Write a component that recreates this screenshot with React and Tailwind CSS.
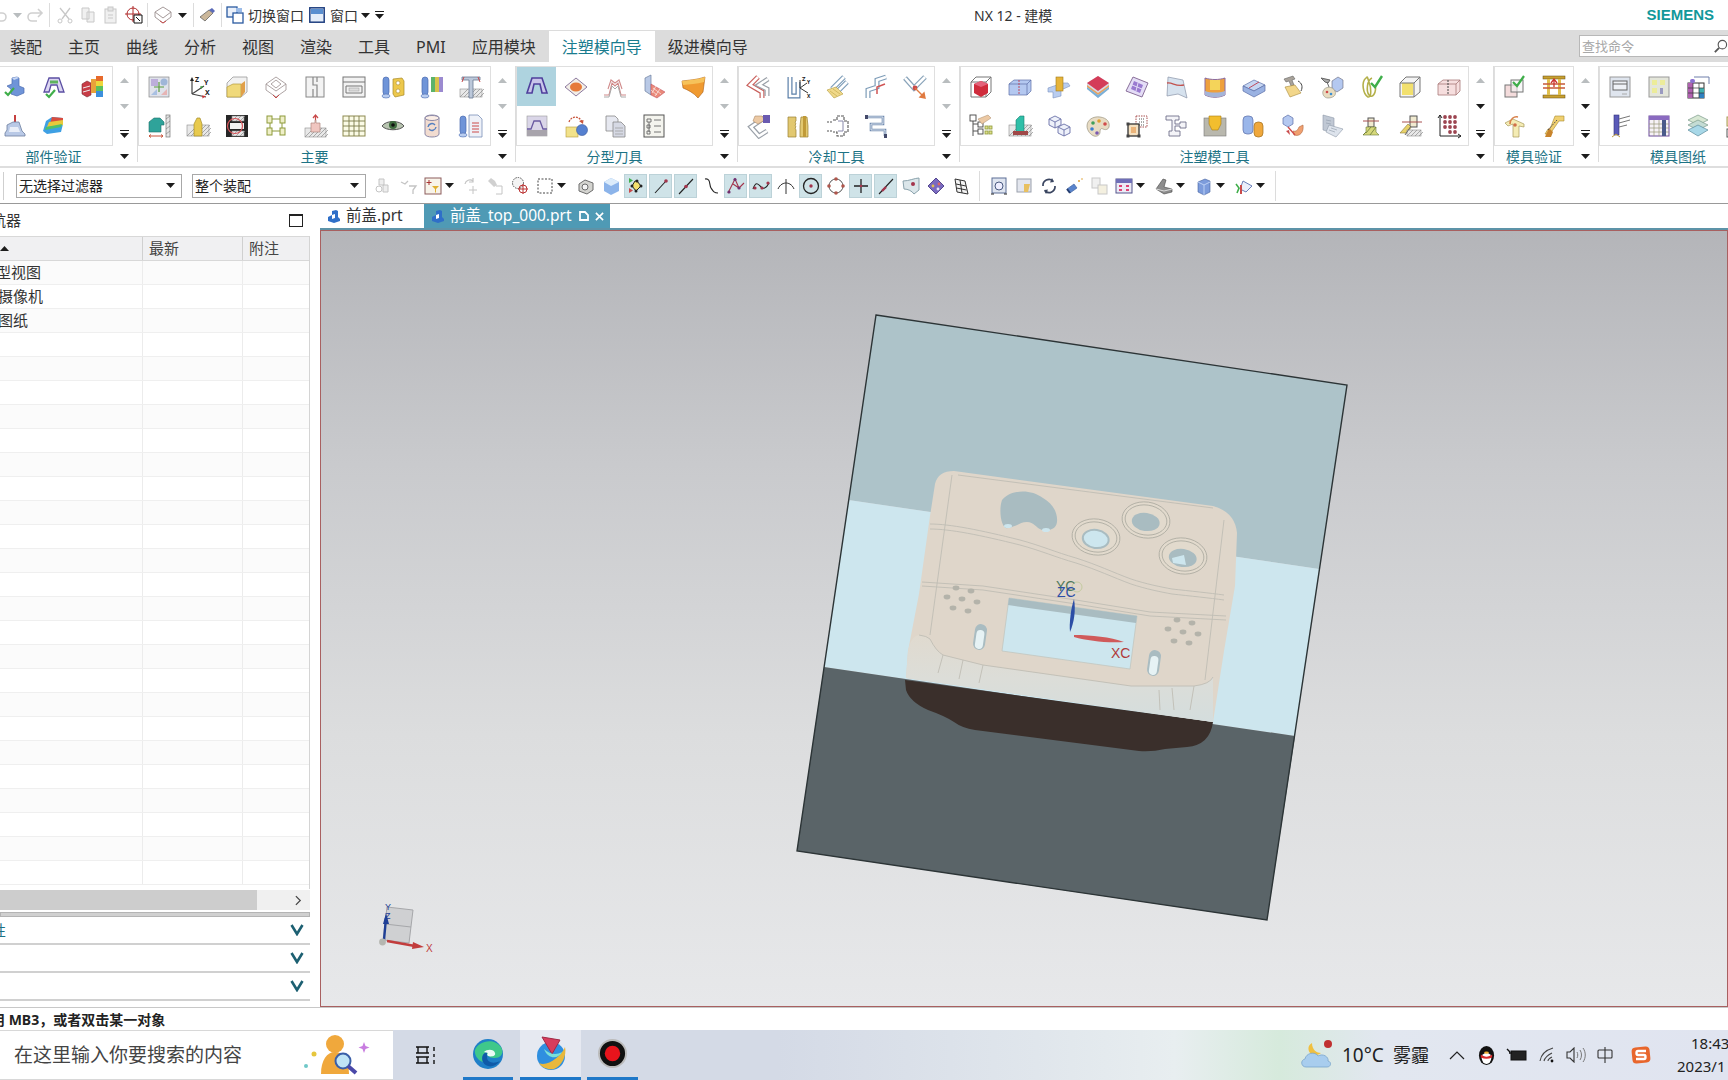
import React from 'react';

const I = ({ children }) => (
  <svg viewBox="0 0 26 26" className="w-[26px] h-[26px] shrink-0">{children}</svg>
);
const T = ({ children }) => (
  <svg viewBox="0 0 20 20" className="w-[20px] h-[20px] shrink-0">{children}</svg>
);

const Caret = ({ up, gray }) => (
  <svg viewBox="0 0 9 5" className="w-[9px] h-[5px] shrink-0">
    <path d={up ? 'M0 5h9L4.500 0z' : 'M0 0h9L4.500 5z'} fill={gray ? '#b9bdbf' : '#1c1c1c'} />
  </svg>
);
const More = () => (
  <div className="flex flex-col items-center gap-[2px]">
    <div className="w-[9px] h-[1px] bg-[#1c1c1c]" />
    <Caret />
  </div>
);

const Check = ({ x = 0, y = 0 }) => (
  <path d={`M${x + 1} ${y + 5}l3 3 6-7`} fill="none" stroke="#3fae4a" strokeWidth="2.200" />
);
const Hatch = ({ x = 2, y = 16, w = 22, h = 8 }) => (
  <g>
    <rect x={x} y={y} width={w} height={h} fill="#e8e8e8" stroke="#8d8d8d" strokeWidth=".6" />
    {[0, 4, 8, 12, 16, 20].filter((d) => d < w).map((d) => (
      <path key={d} d={`M${x + d} ${y + h}l${h} -${h}`} stroke="#8d8d8d" strokeWidth=".7" />
    ))}
  </g>
);
const Bolt = ({ x = 6, c = '#6f94d8' }) => (
  <g>
    <rect x={x} y="3" width="6" height="18" rx="3" fill={c} stroke="#4a6cb0" strokeWidth=".7" />
    <ellipse cx={x + 3} cy="22" rx="4" ry="2" fill="#b9cdf0" stroke="#4a6cb0" strokeWidth=".6" />
  </g>
);
const Pipe = ({ d, c = '#8a8f98' }) => (
  <g fill="none">
    <path d={d} stroke={c} strokeWidth="5" />
    <path d={d} stroke="#fff" strokeWidth="2.600" />
  </g>
);
const Wire = ({ c = '#777' }) => (
  <g fill="none" stroke={c} strokeWidth="1">
    <path d="M3 8h15v15H3zM3 8l5-5h15v15l-5 5M18 8l5-5" />
  </g>
);

const RIBBON = [
  {
    label: '部件验证', first: true, downGray: true,
    rows: [[
      <I><path d="M5 12l5-2v-6l5-1 2 1v8l5 2v5l-7 3-6-2v-5z" fill="#6f94d8" stroke="#4a6cb0" strokeWidth=".7" /><path d="M10 4l5-1 2 1-5 2z" fill="#c9d8f4" /><Check x={2} y={13} /></I>,
      <I><path d="M8 4h10l5 14h-5l-2-7h-6l-2 7H3z" fill="#dcd6f2" stroke="#5b4fa3" strokeWidth="1.300" /><path d="M9 8h8" stroke="#5eb35e" strokeWidth="3" /><Check x={4} y={15} /></I>,
      <I><path d="M2 10l5-3 4 2v12l-4 2-5-3z" fill="#c83c46" stroke="#7b2a32" strokeWidth=".6" /><path d="M3 14l7-2M3 18l7-2" stroke="#eee" /><rect x="16" y="2" width="7" height="5" fill="#e76a2c" /><rect x="16" y="7" width="7" height="5" fill="#edd63b" /><rect x="16" y="12" width="7" height="5" fill="#5cc05c" /><rect x="16" y="17" width="7" height="6" fill="#3c8fdc" /><rect x="11" y="5" width="5" height="14" fill="#e8a23a" /></I>,
    ], [
      <I><path d="M13 2v7" stroke="#c6403f" strokeWidth="2" /><path d="M5 12l6-3h6l3 9 3 3v2H3v-3l2-3z" fill="#b9c9e6" stroke="#6d7f9e" strokeWidth=".8" /><path d="M8 14h8l2 5H7z" fill="#e9eef8" /></I>,
      <I><path d="M5 8l6-4 11 1v6l-2 8-14 2-4-3z" fill="#3ea0e4" /><path d="M11 4l11 1v5l-13 1z" fill="#d84d3f" /><path d="M8 9l14-2v5L6 14z" fill="#e8c93c" /><path d="M5 14l16-3-1 3-16 3z" fill="#4fc06a" /></I>,
    ]],
  },
  {
    label: '主要', downGray: true,
    rows: [[
      <I><rect x="3" y="3" width="20" height="20" fill="#dfe2ea" stroke="#888" strokeWidth=".7" /><rect x="5" y="5" width="7" height="7" fill="#bcaeda" /><circle cx="18" cy="8" r="3.500" fill="#9fb6d8" /><path d="M5 21l6-6v6z" fill="#a9c0e2" /><path d="M15 21l6-6v6z" fill="#e6b4b4" /><path d="M13 8v10M8 13h10" stroke="#5b9c3f" strokeWidth="1.200" /></I>,
      <I><path d="M7 20V5M7 20l14 3M7 20l12-8" fill="none" stroke="#444" strokeWidth="1.200" /><path d="M5 7l2-4 2 4z" fill="#222" /><path d="M21 22l-4-.6.6 3z" fill="#c33" /><path d="M18 12l-3 .5 1.500 2.500z" fill="#3a9c3a" /><text x="10" y="8" fontSize="7" fontWeight="700" fill="#222">Z</text><text x="19" y="11" fontSize="7" fontWeight="700" fill="#222">Y</text><text x="20" y="21" fontSize="7" fontWeight="700" fill="#222">X</text></I>,
      <I><path d="M3 9l6-6h14v15l-6 5H3z" fill="#f2f2f2" stroke="#999" strokeWidth=".8" /><path d="M3 13l6-3h8v13H3z" fill="#f0d97a" stroke="#b49b3a" strokeWidth=".7" /><path d="M17 10l4-3v11l-4 5z" fill="#e0a04a" /></I>,
      <I><g fill="none" stroke="#a59a9a" strokeWidth=".9"><path d="M13 3l10 7-10 7-10-7z" /><path d="M3 10v6l10 7 10-7v-6" /><path d="M13 6l5 4-5 4-5-4z" /></g><path d="M10 21l3 3 3-3" fill="none" stroke="#c94a4a" /></I>,
      <I><rect x="4" y="3" width="18" height="20" fill="#f3f3f3" stroke="#888" /><path d="M11 3v8h4v12M15 3v5M11 23v-8" fill="none" stroke="#888" strokeWidth="1.200" /></I>,
      <I><rect x="2" y="3" width="22" height="20" fill="#f2f2f2" stroke="#777" /><path d="M2 8h22M5 12h16v7H5z" fill="none" stroke="#777" /><rect x="8" y="14" width="10" height="3" fill="#ddd" stroke="#999" strokeWidth=".5" /></I>,
      <I><Bolt x={3} /><path d="M13 5l9-1 2 3v14l-9 2-2-3z" fill="#edc84c" stroke="#a88a2a" strokeWidth=".7" /><circle cx="18" cy="9" r="2" fill="#fff" stroke="#a88a2a" strokeWidth=".6" /><circle cx="18" cy="17" r="2" fill="#fff" stroke="#a88a2a" strokeWidth=".6" /></I>,
      <I><Bolt x={3} /><rect x="12" y="3" width="4" height="15" fill="#5cb36a" /><rect x="16" y="3" width="4" height="15" fill="#d8c24c" /><rect x="20" y="3" width="4" height="15" fill="#9b8ad0" /></I>,
      <I><Hatch x={2} y={15} w={22} h={8} /><path d="M4 3h18v3H15v18h-4V6H4z" fill="#bcc8da" stroke="#6a7a92" strokeWidth=".8" /><path d="M6 3l-2 5M20 3l2 5" stroke="#c94a4a" /></I>,
    ], [
      <I><path d="M3 19V9l5-4h6l4 4v3h-3v7z" fill="#2fa39a" stroke="#1c6e68" strokeWidth=".6" /><rect x="20" y="2" width="4" height="22" fill="#e6e6e6" stroke="#777" strokeWidth=".7" /><path d="M20 6l4-3M20 11l4-3M20 16l4-3M20 21l4-3" stroke="#777" strokeWidth=".6" /><path d="M3 23h14M3 23l2-1.500M3 23l2 1.500M17 23l-2-1.500M17 23l-2 1.500" stroke="#c8553c" /></I>,
      <I><Hatch x={2} y={12} w={22} h={11} /><path d="M9 23V11l3-6h3l2 6v12z" fill="#e8ca4e" stroke="#a48c2c" strokeWidth=".7" /></I>,
      <I><rect x="2" y="2" width="22" height="22" fill="#262626" /><Hatch x={8} y={3} w={12} h={5} /><Hatch x={8} y={18} w={12} h={5} /><path d="M6 10h14v6H6z" fill="#f2f2f2" /><circle cx="11" cy="13" r="7.500" fill="none" stroke="#d8555a" strokeWidth="1.200" /></I>,
      <I><g fill="#efefc8" stroke="#8d9a3a" strokeWidth="1"><rect x="4" y="3" width="5" height="7" /><rect x="17" y="3" width="5" height="7" /><rect x="4" y="15" width="5" height="7" /><rect x="17" y="15" width="5" height="7" /></g><path d="M9 6h8M9 18h8M7 10v5M19 10v5" stroke="#8d9a3a" /></I>,
      <I><Hatch x={3} y={15} w={21} h={9} /><path d="M9 10h4V7h1v3h4v9H9z" fill="#f0c6c0" stroke="#b08880" strokeWidth=".7" /><path d="M13.500 7V2M11 5l2.500-3L16 5" fill="none" stroke="#c94a4a" strokeWidth="1.200" /></I>,
      <I><rect x="2" y="3" width="22" height="20" fill="#fbfbe6" stroke="#8d8a50" /><path d="M2 8h22M2 13h22M2 18h22M8 3v20M13 3v20M18 3v20" stroke="#7a7a4a" strokeWidth=".9" /></I>,
      <I><path d="M2 13c4-6 18-6 22 0-4 5-18 5-22 0z" fill="#b8c4b0" stroke="#555" /><circle cx="13" cy="12" r="4" fill="#3f6d3f" /><circle cx="13" cy="12" r="1.800" fill="#111" /></I>,
      <I><path d="M6 5c0-4 14-4 14 0v16c0 4-14 4-14 0z" fill="#f2dcd0" stroke="#8d8aa8" /><ellipse cx="13" cy="5" rx="7" ry="2.500" fill="#fbeee6" stroke="#8d8aa8" /><path d="M9 14a4 4 0 0 1 7-2M17 14a4 4 0 0 1-7 2" fill="none" stroke="#5580c0" strokeWidth="1.400" /></I>,
      <I><Bolt x={2} /><path d="M11 2h9l4 4v18H11z" fill="#eef1f8" stroke="#7a8fb8" strokeWidth=".8" /><path d="M14 10h7M14 13h7M14 16h7M14 19h7" stroke="#cc4a4a" /></I>,
    ]],
  },
  {
    label: '分型刀具', downGray: true, hl: true,
    rows: [[
      <I><path d="M8 4h10l5 15h-5l-2-9h-6l-2 9H3z" fill="#c9c5ea" stroke="#4f3f9c" strokeWidth="1.600" /></I>,
      <I><path d="M13 4l11 9-11 9-11-9z" fill="#f2eee6" stroke="#8d7aa0" /><ellipse cx="13" cy="13" rx="6" ry="4.500" fill="#e67a3a" /></I>,
      <I><path d="M2 21h5l3-12 3 3 3-3 3 12h5M6 15l3-9 4 3 4-3 3 9" fill="none" stroke="#d08a8a" strokeWidth="1.100" /><path d="M2 23h5l3-11 3 3 3-3 3 11h5" fill="none" stroke="#aaa" /></I>,
      <I><path d="M4 4l6-3v20l-6-4z" fill="#b9c9e6" stroke="#6d7f9e" strokeWidth=".7" /><path d="M10 10l14 8-8 6-6-3z" fill="#ea8a7a" stroke="#b45" strokeWidth=".5" /><path d="M12 14l8 6M10 16l6 5M15 12l-4 7M19 15l-5 7" stroke="#fff" strokeWidth=".6" /></I>,
      <I><path d="M2 7c7-1 14-1 23-4l-2 15-5 6c-4-5-10-8-15-10z" fill="#f09a30" stroke="#a85c18" strokeWidth=".6" /><path d="M2 7c7-1 14-1 23-4l-1 5C17 10 9 10 3 11z" fill="#f6c25a" /></I>,
    ], [
      <I><rect x="3" y="3" width="20" height="20" fill="#dad6e8" stroke="#999" strokeWidth=".6" /><rect x="3" y="17" width="20" height="6" fill="#a8a4ac" /><path d="M3 16h4l3-8h6l3 8h4" fill="none" stroke="#6a5aa0" strokeWidth="1.300" /></I>,
      <I><rect x="3" y="14" width="12" height="10" fill="#f2e28a" stroke="#b49b3a" strokeWidth=".6" /><circle cx="19" cy="17" r="5.500" fill="#5580d0" stroke="#39589c" strokeWidth=".6" /><path d="M6 9c2-6 10-7 13 0" fill="none" stroke="#c8553c" strokeWidth="1.300" strokeDasharray="2 1" /><path d="M16 8l4 3 .5-4z" fill="#c8553c" /></I>,
      <I><path d="M4 3h9l3 3v12H4z" fill="#e6e8f0" stroke="#888" strokeWidth=".8" /><path d="M11 9h8l4 4v11H11z" fill="#d6d9e4" stroke="#888" strokeWidth=".8" /><path d="M13 15h8M13 18h8M13 21h8" stroke="#999" strokeWidth=".7" /></I>,
      <I><rect x="3" y="2" width="20" height="22" fill="#f4f4ee" stroke="#555" /><path d="M6 6h4v3H6zM6 12h3v3H6zM6 18h3v3H6zM8 9v10M13 7h7M13 13h7M13 19h7" fill="none" stroke="#666" strokeWidth=".9" /></I>,
    ]],
  },
  {
    label: '冷却工具', downGray: true,
    rows: [[
      <I><Pipe d="M12 3L4 11l12 7v6" c="#c9605c" /><Pipe d="M22 5l-9 6 8 4v7" c="#9aa0a8" /></I>,
      <I><Pipe d="M5 3v19h8V8" c="#5a7fa8" /><path d="M15 14V6M15 14l8 5M15 14l7-5" stroke="#333" fill="none" /><text x="17" y="7" fontSize="6" fontWeight="700" fill="#222">Z</text><text x="22" y="10" fontSize="5" fontWeight="700" fill="#222">Y</text><text x="22" y="24" fontSize="5" fontWeight="700" fill="#222">X</text></I>,
      <I><Pipe d="M8 15L20 3" c="#7d9cb8" /><Pipe d="M14 17l9-9" c="#7d9cb8" /><path d="M3 16l9-3 7 7-9 4z" fill="#f0d98a" stroke="#b49b3a" strokeWidth=".6" /><path d="M6 17l7 5M9 15l7 5" stroke="#b49b3a" strokeWidth=".5" /></I>,
      <I><Pipe d="M5 24V16l9-3V6l9-3" c="#7d9cb8" /><path d="M14 20v-7l8-3" fill="none" stroke="#d05454" strokeWidth="1.500" /></I>,
      <I><Pipe d="M3 4l9 10L23 3" c="#8aa4ba" /><circle cx="13" cy="14" r="2.400" fill="#c94a4a" /><path d="M13 14l9 9M23 24l-5-1 4-4z" fill="#e07a40" stroke="#e07a40" strokeWidth="1.400" /></I>,
    ], [
      <I><Pipe d="M18 5L5 14l8 9 8-5" c="#9aa0a8" /><path d="M9 3l7 0 3 4-7 4-5-3z" fill="#ecc9a4" stroke="#ab8a6a" strokeWidth=".6" /><rect x="17" y="2" width="7" height="8" fill="#6a5ab0" /></I>,
      <I><path d="M3 4h8v4l-1 1 1 2-1 1 1 2-1 1 1 2v7H3z" fill="#e2c870" stroke="#9a8030" strokeWidth=".7" /><path d="M16 4h6l1 9v11h-8V13z" fill="#e2c870" stroke="#9a8030" strokeWidth=".7" /><rect x="18" y="3" width="3" height="21" fill="#c09a38" /></I>,
      <I><path d="M3 9h6M3 18h6" stroke="#555" strokeWidth="1.200" strokeDasharray="2 1" /><path d="M9 7h4V3h7v5h4v11h-4v4h-7v-4H9" fill="none" stroke="#555" strokeWidth="1.100" strokeDasharray="3 1" /><path d="M14 8h5v10h-5" fill="none" stroke="#88a" /></I>,
      <I><path d="M4 4h16v7H8v6h14v6" fill="none" stroke="#6f8ab0" strokeWidth="2.600" /><path d="M4 4h16v7H8v6h14v6" fill="none" stroke="#e6ecf4" strokeWidth=".9" /><rect x="2" y="2" width="3" height="4" fill="#444a6a" /><rect x="21" y="21" width="3" height="4" fill="#444a6a" /></I>,
    ]],
  },
  {
    label: '注塑模工具', downBlack: true,
    rows: [[
      <I><Wire /><path d="M6 10l7-3 7 3v9l-7 4-7-4z" fill="#cf2c3c" /><path d="M6 10l7-3 7 3-7 3z" fill="#e4627a" /></I>,
      <I><path d="M2 10l5-4h17v11l-4 4H2z" fill="#b4c8f0" stroke="#5b6fa8" strokeWidth=".7" /><path d="M2 10h18v11M20 10l4-4" fill="none" stroke="#5b6fa8" strokeWidth=".7" /><path d="M12 6v15" stroke="#c04a5c" strokeDasharray="2 1" /></I>,
      <I><path d="M2 14l9-3v-2h11l2 3-9 4v6l-8 2v-6H2z" fill="#b9cdf0" stroke="#7a90c0" strokeWidth=".6" /><rect x="10" y="3" width="7" height="14" fill="#e6b43a" stroke="#a07a1c" strokeWidth=".6" /></I>,
      <I><path d="M13 2l11 7v6L13 24 2 15V9z" fill="#d8d8e4" /><path d="M13 2l11 7-11 8L2 9z" fill="#d43c58" /><path d="M2 11l11 8 11-8v2l-11 8-11-8z" fill="#e8a45c" /><path d="M2 13l11 8 11-8v2l-11 9-11-9z" fill="#7ab0d8" /></I>,
      <I><path d="M9 3l15 6-6 14L2 17z" fill="#e4ddf6" stroke="#8a6f9a" /><path d="M10 7l9 4-3 8-9-4z" fill="#9a7ad0" /><path d="M14 9l-2 8M8 11l10 4" stroke="#e4ddf6" /></I>,
      <I><path d="M5 3l15 3 4 18-9-4-11 2z" fill="#d6e2ee" stroke="#8a93a8" strokeWidth=".7" /><path d="M4 9c6-1 8 4 17 2" fill="none" stroke="#c2524e" strokeWidth="1.300" /></I>,
      <I><path d="M3 4c6 2 14 2 20 0v17c-6 3-14 3-20 0z" fill="#eea03c" stroke="#8a6aa0" /><path d="M8 6h10v10H8z" fill="#f4d45a" /><path d="M3 17c6 2 14 2 20 0v4c-6 3-14 3-20 0z" fill="#a4b4d8" /></I>,
      <I><path d="M2 12l11-6 11 5-11 6z" fill="#c6d6f2" stroke="#5b6fa8" strokeWidth=".7" /><path d="M2 12v5l11 6 11-6v-6l-11 6z" fill="#9ab2e2" stroke="#5b6fa8" strokeWidth=".7" /><path d="M8 14l10-6" stroke="#c04a5c" /></I>,
      <I><path d="M4 5l9-3 2 3-3 1 2 5-3 1-2-5-3 1z" fill="#a8a29a" stroke="#555" strokeWidth=".5" /><path d="M5 13l10-2 6 8-11 4z" fill="#f2d68a" stroke="#a88a3a" strokeWidth=".6" /><path d="M18 7c4 2 5 6 3 10" fill="none" stroke="#444" /></I>,
      <I><path d="M13 7l6-4 5 3v8l-6 4-5-3z" fill="#b4c8f0" stroke="#667" strokeWidth=".6" /><path d="M2 4l9 2-2 3-3-1zM8 8l2 5" stroke="#666" fill="#aaa" /><path d="M4 17c2-5 10-5 12 0s-3 7-7 7-6-4-5-7z" fill="#e8dcc0" stroke="#8a8a7a" strokeWidth=".6" /><circle cx="8" cy="18" r="1.300" fill="#d04a4a" /><circle cx="12" cy="20" r="1.300" fill="#3c8fd0" /></I>,
      <I><path d="M8 4c-5 4-3 16 2 19 4 1 3-10 1-15s-1-6-3-4zM14 4c-5 2-6 13-3 17s8-2 6-10" fill="none" stroke="#b4b04a" strokeWidth="1.600" /><path d="M13 9l4 4 7-11" fill="none" stroke="#3fae4a" strokeWidth="2.400" /></I>,
      <I><path d="M3 9l6-6h14v15l-6 5H3z" fill="#f4f4f4" stroke="#777" /><path d="M5 9h11v12H5z" fill="#f2e06e" /><path d="M3 9h14v14M17 9l6-6" fill="none" stroke="#777" /></I>,
      <I><path d="M2 10l5-4h17v11l-4 4H2z" fill="#f6dede" stroke="#a87878" strokeWidth=".8" /><path d="M2 10h18v11M20 10l4-4" fill="none" stroke="#a87878" strokeWidth=".8" /><path d="M12 6v15" stroke="#444" strokeDasharray="2 1" /></I>,
    ], [
      <I><path d="M5 5v18M5 11h5M5 18h5" stroke="#555" /><rect x="2" y="2" width="6" height="6" fill="#fff" stroke="#444" strokeWidth=".9" /><rect x="10" y="9" width="5" height="5" fill="#fff" stroke="#444" strokeWidth=".9" /><rect x="10" y="16" width="5" height="5" fill="#fff" stroke="#444" strokeWidth=".9" /><path d="M10 6l10-4 3 3-9 6z" fill="#ecc9a4" stroke="#ab8a6a" strokeWidth=".5" /><g fill="#dfe08a" stroke="#8d9a3a" strokeWidth=".8"><rect x="17" y="13" width="3" height="3" /><rect x="21" y="13" width="3" height="3" /><rect x="17" y="18" width="3" height="3" /><rect x="21" y="18" width="3" height="3" /></g></I>,
      <I><Hatch x={2} y={12} w={22} h={11} /><path d="M9 19V7l4-4h4v16z" fill="#2fbfa8" stroke="#1c7e70" strokeWidth=".6" /><rect x="6" y="18" width="15" height="4" fill="#a04848" /></I>,
      <I><g fill="#eef1fa" stroke="#6a70a8" strokeWidth=".9"><path d="M3 6l6-3 6 3v6l-6 3-6-3z" /><path d="M12 14l6-3 6 3v6l-6 3-6-3z" /><path d="M3 6l6 3 6-3M9 9v6M12 14l6 3 6-3M18 17v6" /></g></I>,
      <I><path d="M2 13C2 7 8 3 15 4s10 5 9 10c-1 3-4 3-6 2s-3 0-3 3-3 5-6 4-7-5-7-10z" fill="#e8dcc4" stroke="#99937f" strokeWidth=".7" /><circle cx="8" cy="10" r="1.800" fill="#3fa05a" /><circle cx="14" cy="8" r="1.800" fill="#e0a030" /><circle cx="20" cy="11" r="1.800" fill="#d04a4a" /><circle cx="7" cy="16" r="1.800" fill="#3c7fd0" /><circle cx="12" cy="20" r="1.800" fill="#7a5ab0" /></I>,
      <I><rect x="12" y="3" width="11" height="11" fill="#fff" stroke="#a85050" strokeDasharray="1.500 1" /><path d="M15 6h5M15 9h5M15 12h5" stroke="#555" strokeDasharray="1 1" /><rect x="4" y="11" width="11" height="12" fill="#f4e0c0" stroke="#333" strokeWidth="1.300" /><rect x="7" y="14" width="5" height="6" fill="#ecb47a" /><g fill="#444"><rect x="2.500" y="9.500" width="3" height="3" /><rect x="2.500" y="21.500" width="3" height="3" /><rect x="13.500" y="21.500" width="3" height="3" /></g></I>,
      <I><path d="M3 3h13v4h-4v4h5v-2h6v6h-6v-2h-5v5h5v5H6v-5h3V7H3z" fill="#f4f4f8" stroke="#6f6f8a" strokeWidth=".9" /></I>,
      <I><rect x="2" y="5" width="22" height="18" fill="#b9b8ae" stroke="#777" strokeWidth=".6" /><path d="M7 3h12v8l-3 6h-6l-3-6z" fill="#f2be2e" stroke="#a87c10" strokeWidth=".6" /></I>,
      <I><rect x="2" y="3" width="10" height="18" rx="4" fill="#9ab6ea" stroke="#5b6fa8" strokeWidth=".7" /><rect x="13" y="9" width="9" height="15" rx="4" fill="#f0a83c" stroke="#a07020" strokeWidth=".7" /></I>,
      <I><path d="M3 5l5-3 5 3v6l-5 3-5-3z" fill="#b4c8f0" stroke="#5b6fa8" strokeWidth=".7" /><path d="M14 22c6 2 10-3 9-10l-4 2c-1 3-3 5-6 4z" fill="#f0a070" stroke="#b06a40" strokeWidth=".6" /><path d="M8 14l7 8" stroke="#d04a4a" strokeWidth="1.300" /><path d="M6 18l4 4-1-5z" fill="#c94a4a" /></I>,
      <I><path d="M4 2l11 3v15L4 17z" fill="#c0c8d4" stroke="#8d98a8" strokeWidth=".6" /><path d="M10 12l14 4-7 8-10-5z" fill="#dde3ec" stroke="#8d98a8" strokeWidth=".6" /><path d="M7 7l5 1M7 10l5 1M12 15l6 2M10 17l6 2" stroke="#8d98a8" strokeWidth=".6" /></I>,
      <I><rect x="10" y="5" width="6" height="9" fill="#f0ead0" stroke="#555" /><path d="M5 8h16" stroke="#a85050" /><path d="M8 14h10v5l3 3H5l3-3z" fill="#d6d87a" stroke="#6a7a3a" strokeWidth=".6" /><path d="M8 20l5-6M12 22l6-8M5 22l3-3" stroke="#6a7a3a" strokeWidth=".8" /></I>,
      <I><rect x="13" y="3" width="7" height="11" fill="#f0ead0" stroke="#555" /><path d="M5 9h20" stroke="#a85050" /><path d="M3 20l8-9 3 3-3 6z" fill="#e8d26a" stroke="#8a7a3a" strokeWidth=".6" /><Hatch x={10} y={17} w={14} h={6} /><path d="M8 22l6-9" stroke="#666" /></I>,
      <I><g fill="#9c4450">{[4, 9, 14].flatMap((y) => [9, 14, 19].map((x) => <circle key={x + '-' + y} cx={x} cy={y} r="1.900" />))}<circle cx="14" cy="19" r="1.900" /><circle cx="19" cy="19" r="1.900" /></g><path d="M4 2v21h21M2 5l2-3 2 3M22 21l3 2-3 2" fill="none" stroke="#222" /></I>,
    ]],
  },
  {
    label: '模具验证', downBlack: true,
    rows: [[
      <I><rect x="3" y="11" width="12" height="12" fill="#f4dcdc" stroke="#777" /><rect x="9" y="6" width="12" height="12" fill="#f4f4f4" fillOpacity=".6" stroke="#777" /><path d="M11 8l4 4 7-10" fill="none" stroke="#3fae4a" strokeWidth="2.200" /></I>,
      <I><rect x="2" y="2" width="22" height="3" fill="#c8a030" stroke="#604a10" strokeWidth=".5" /><rect x="2" y="21" width="22" height="3" fill="#c8a030" stroke="#604a10" strokeWidth=".5" /><rect x="6" y="5" width="3" height="16" fill="#e0c050" /><rect x="17" y="5" width="3" height="16" fill="#e0c050" /><path d="M2 10h22M2 14h22" stroke="#c65a3a" strokeWidth="1.500" /><path d="M13 5v8M10 9l3-4 3 4" fill="none" stroke="#c33" strokeWidth="1.300" /></I>,
    ], [
      <I><path d="M3 10l8-4 11 5v3l-5-1v11h-6V11l-5 2z" fill="#f4ecb4" stroke="#a89a5a" strokeWidth=".7" /><path d="M8 11c0-5 4-8 8-7" fill="none" stroke="#d8804a" strokeWidth="1.600" /><circle cx="13" cy="12" r="1.800" fill="#d0704a" /></I>,
      <I><path d="M14 3h9v5h-5l-9 13H4l3-5h2z" fill="#f0d070" stroke="#a88a30" strokeWidth=".6" /><path d="M4 24l4-9 4 4-2 5z" fill="#c8842c" /><path d="M7 17L16 7" stroke="#555" strokeDasharray="2 1" /></I>,
    ]],
  },
  {
    label: '模具图纸', open: true,
    rows: [[
      <I><rect x="3" y="3" width="20" height="20" fill="#dfe5ee" stroke="#999" /><rect x="6" y="7" width="14" height="9" fill="#eef1f6" stroke="#666" /><path d="M6 10h14" stroke="#666" /><path d="M15 20h5" stroke="#aaa" /></I>,
      <I><rect x="3" y="3" width="20" height="20" fill="#e4e6da" stroke="#999" /><rect x="6" y="6" width="5" height="5" fill="#ecec9a" /><rect x="14" y="6" width="5" height="5" fill="#ecec9a" /><rect x="6" y="14" width="5" height="5" fill="#ecec9a" /><rect x="14" y="14" width="3" height="6" fill="#9a9ac0" /></I>,
      <I><rect x="3" y="9" width="16" height="15" fill="#fff" stroke="#333" /><rect x="3" y="9" width="5" height="15" fill="#b060b0" /><rect x="14" y="14" width="5" height="5" fill="#3fb0b0" /><rect x="14" y="19" width="5" height="5" fill="#2f80c0" /><path d="M3 14h16M3 19h16M8 9v15M14 9v15" stroke="#333" strokeWidth=".7" /><path d="M9 3h15v7" fill="none" stroke="#6f7faa" /><rect x="5" y="5" width="5" height="4" rx="2" fill="#8a6fd0" /></I>,
      <I><path d="M8 13h18" stroke="#555" /></I>,
    ], [
      <I><rect x="7" y="2" width="5" height="20" fill="#5a5ab8" stroke="#33337a" strokeWidth=".6" /><path d="M12 6l11-3M12 10l11-3M12 14l8-2" stroke="#777" /><path d="M5 24l4-3 4 3" fill="none" stroke="#c0a040" /></I>,
      <I><rect x="3" y="3" width="20" height="20" fill="#f6f2f6" stroke="#6a4a9a" /><rect x="3" y="3" width="20" height="4" fill="#8a6ac0" /><path d="M3 11h20M3 15h20M3 19h20M8 7v16M13 7v16" stroke="#997" strokeWidth=".7" /><rect x="16" y="7" width="4" height="16" fill="#4a5a8a" /></I>,
      <I><path d="M3 7l10-5 10 5-10 5z" fill="#d8e8d4" stroke="#7a9a8a" strokeWidth=".7" /><path d="M3 12l10-5 10 5-10 5z" fill="#c4dcd4" stroke="#7a9a8a" strokeWidth=".7" /><path d="M3 17l10-5 10 5-10 6z" fill="#a8d8e8" stroke="#5a8a9a" strokeWidth=".7" /></I>,
      <I><rect x="3" y="4" width="22" height="9" fill="#f2e6b0" stroke="#a89a5a" /><rect x="3" y="16" width="22" height="8" fill="#fff" stroke="#555" /></I>,
    ]],
  },
];

const Group = ({ g }) => (
  <div className={`flex shrink-0 ${g.first ? '-ml-[6px]' : ''}`}>
    <div className="flex flex-col">
      <div className="flex flex-col border border-[#dfdfdf] h-[80px]">
        {g.rows.map((row, r) => (
          <div key={r} className="flex h-[39px]">
            {row.map((ic, c) => (
              <div key={c} className={`w-[39px] h-[39px] flex items-center justify-center ${g.hl && r === 0 && c === 0 ? 'bg-[#aed3df]' : ''}`}>{ic}</div>
            ))}
          </div>
        ))}
      </div>
      <div className="h-[22px] flex items-center justify-center text-[14px] text-[#1d7385]">{g.label}</div>
    </div>
    {!g.open && (
      <div className="w-[25px] pr-[1px] flex flex-col items-center border-r border-[#dcdcdc] mb-[4px]">
        <div className="h-[26px] pt-[12px]"><Caret up gray /></div>
        <div className="h-[26px] pt-[12px]"><Caret gray={g.downGray} /></div>
        <div className="h-[26px] pt-[12px]"><More /></div>
        <div className="pt-[10px]"><Caret /></div>
      </div>
    )}
  </div>
);

const NAMES = ['主页', '曲线', '分析', '视图', '渲染', '工具', 'PMI', '应用模块'];

const SEL = [
  { ic: <T><path d="M6 3h5v6H6zM10 9h5v7h-5z" fill="#eee" stroke="#c4c4c4" /><circle cx="6" cy="13" r="3" fill="none" stroke="#c4c4c4" /></T> },
  { ic: <T><path d="M3 6l4 2 3-3M11 10h7l-3 4v4" fill="none" stroke="#c4c4c4" strokeWidth="1.300" /></T> },
  { ic: <T><rect x="2" y="2" width="16" height="16" fill="#f8f4ea" stroke="#8c5c5c" /><path d="M6 4v5M3.500 6.500h5" stroke="#a33" /><path d="M9 10h7l-3 3v3l-1 1v-4z" fill="#e0b030" /></T>, caret: 12 },
  { ic: <T><path d="M5 8a5 5 0 0 1 8-3M13 2v4h-4" fill="none" stroke="#c4c4c4" strokeWidth="1.200" /><path d="M13 10v8M9 14h8" stroke="#c4c4c4" /></T> },
  { ic: <T><path d="M3 5l3-3 4 3 2 4-3 2z" fill="#d0d0d0" /><path d="M11 10h6v8h-6" fill="none" stroke="#c4c4c4" /></T> },
  { ic: <T><circle cx="8" cy="7" r="5.500" fill="#f4f4f4" stroke="#555" strokeDasharray="1.500 1" /><circle cx="13" cy="13" r="4" fill="none" stroke="#b33" /><path d="M13 8v10M8 13h10" stroke="#b33" /></T> },
  { ic: <T><rect x="3" y="3" width="14" height="14" fill="none" stroke="#444" strokeDasharray="2 1.500" /></T>, caret: 16 },
  { ic: <T><path d="M3 8l6-4 8 3v7l-6 4-8-3z" fill="#d4d4d0" stroke="#6c6c6c" /><circle cx="9" cy="11" r="3" fill="#f4f4f4" stroke="#6c6c6c" /></T> },
  { ic: <T><path d="M3 6l7-4 8 4v9l-8 4-7-4z" fill="#8cb4ea" /><path d="M3 6l7-4 8 4-8 4z" fill="#dcecfb" /></T> },
  { hl: true, ic: <T><path d="M3 2v5l4-2.500z" fill="#3fae4a" /><path d="M3 12v5l4-2.500z" fill="#c94a4a" /><path d="M9 5l-3 5 4 5 5-5-4-5z" fill="#f2e06e" stroke="#222" /><circle cx="11" cy="5" r="1.500" fill="#222" /><circle cx="6" cy="10" r="1.500" fill="#222" /><circle cx="15" cy="10" r="1.500" fill="#222" /><circle cx="10" cy="15" r="1.500" fill="#222" /></T> },
  { hl: true, ic: <T><path d="M4 17L15 5" stroke="#222" strokeWidth="1.100" /><circle cx="15" cy="5" r="1.800" fill="#a3344c" /></T> },
  { hl: true, ic: <T><path d="M3 18L17 3" stroke="#222" strokeWidth="1.100" /><circle cx="10" cy="10.500" r="1.800" fill="#a3344c" /></T> },
  { ic: <T><path d="M4 3c6-1 4 6 6 9s3 5 7 5" fill="none" stroke="#222" strokeWidth="1.100" /></T> },
  { hl: true, ic: <T><path d="M2 17L9 3l4 9 5-5M7 8l6 4" fill="none" stroke="#a3344c" strokeWidth="1.100" /><circle cx="9" cy="3.500" r="1.600" fill="#703070" /><circle cx="13" cy="12" r="1.600" fill="#703070" /><circle cx="3" cy="16" r="1.600" fill="#703070" /></T> },
  { hl: true, ic: <T><path d="M2 13c3-9 6-4 8-2s5 2 8-4" fill="none" stroke="#222" strokeWidth="1.100" /><circle cx="4" cy="12" r="1.600" fill="#a3344c" /><circle cx="11" cy="12" r="1.600" fill="#a3344c" /><circle cx="17" cy="7" r="1.600" fill="#a3344c" /></T> },
  { ic: <T><path d="M10 3v15M2 13c2-5 6-6 8-6s6 1 8 6" fill="none" stroke="#333" /></T> },
  { hl: true, ic: <T><circle cx="10" cy="10" r="7.500" fill="none" stroke="#222" strokeWidth="1.300" /><circle cx="10" cy="10" r="1.700" fill="#a3344c" /></T> },
  { ic: <T><circle cx="10" cy="10" r="7" fill="none" stroke="#555" /><g fill="#b0564c"><circle cx="10" cy="3" r="1.800" /><circle cx="10" cy="17" r="1.800" /><circle cx="3" cy="10" r="1.800" /><circle cx="17" cy="10" r="1.800" /></g></T> },
  { hl: true, ic: <T><path d="M10 3v14M3 10h14" stroke="#222" strokeWidth="1.300" /><circle cx="10" cy="10" r="1.300" fill="#a3344c" /></T> },
  { hl: true, ic: <T><path d="M3 18L17 3" stroke="#222" strokeWidth="1.100" /><path d="M6 15l4-4" stroke="#a3344c" strokeWidth="2.400" /></T> },
  { ic: <T><path d="M2 5c6 0 12-3 16-3v12l-5 4c-2-3-6-5-10-5z" fill="#dbe6ea" stroke="#8aa2ac" /><circle cx="12" cy="8" r="2" fill="#a3344c" /></T> },
  { ic: <T><path d="M10 2l8 8-8 8-8-8z" fill="#7a6ac0" stroke="#554890" /><circle cx="7" cy="10" r="1.400" fill="#e2c050" /><circle cx="13" cy="8" r="1.400" fill="#d66" /><circle cx="12" cy="13" r="1.400" fill="#e6e6f2" /></T> },
  { ic: <T><path d="M4 3l10 2 3 13-11-2z" fill="#f3f3f3" stroke="#333" /><path d="M9 4l2 13M5 8l10 2M5.500 12l10 2" stroke="#333" /></T> },
  { sep: true },
  { ic: <T><rect x="3" y="2" width="14" height="15" fill="#dfe5f0" stroke="#5c6e96" /><circle cx="10" cy="10" r="4" fill="#eef" stroke="#4a5a80" /><path d="M2 18h3M15 18h3" stroke="#222" /></T> },
  { ic: <T><rect x="3" y="3" width="14" height="13" fill="#e3e6ee" stroke="#9aa0ac" /><path d="M10 8h6l-2 8h-4z" fill="#e8c060" /></T> },
  { ic: <T><path d="M4 10a6 6 0 0 1 10-5M16 10a6 6 0 0 1-10 5" fill="none" stroke="#3a4560" strokeWidth="1.700" /><path d="M13 2l2 4-4 .5zM7 18l-2-4 4-.5z" fill="#3a4560" /></T> },
  { ic: <T><path d="M3 13l7-5 3 4-7 5z" fill="#5a84cc" stroke="#3b5c98" strokeWidth=".6" /><path d="M3 13l3 4" stroke="#263e70" strokeWidth="2" /><circle cx="15" cy="5" r="1" fill="#e0a030" /><circle cx="18" cy="3" r=".8" fill="#e0a030" /></T> },
  { ic: <T><rect x="3" y="2" width="8" height="10" fill="#f0f0f0" stroke="#c8c8c8" /><rect x="9" y="9" width="9" height="9" fill="#f4f0e0" stroke="#c8c8c8" /></T> },
  { ic: <T><rect x="2" y="3" width="16" height="14" fill="#ecebf6" stroke="#55558c" /><rect x="2" y="3" width="16" height="4" fill="#6f6fb8" /><rect x="5" y="9" width="3" height="2" fill="#d47" /><rect x="12" y="9" width="3" height="2" fill="#d47" /><rect x="5" y="13" width="3" height="2" fill="#d47" /><rect x="12" y="13" width="3" height="2" fill="#d47" /></T>, caret: 15 },
  { ic: <T><path d="M2 13l7-10 3 1-2 7 8 2v3l-8 2z" fill="#8d8d8d" stroke="#444" strokeWidth=".6" /><path d="M2 13l8 2 8-2" stroke="#ddd" fill="none" /></T>, caret: 15 },
  { ic: <T><path d="M4 6l7-3 5 2v11l-6 3-6-3z" fill="#7d9cdc" stroke="#44619e" strokeWidth=".6" /><path d="M4 6l6 3 6-3M10 9v10" stroke="#bcd0f4" fill="none" /></T>, caret: 15 },
  { ic: <T><path d="M9 5l9 5-6 6-6-3z" fill="#eaeefa" stroke="#6a80b8" /><path d="M2 8l3 4-2 5" stroke="#3fae4a" strokeWidth="1.600" fill="none" /><path d="M7 9v9" stroke="#c94a4a" strokeWidth="2" /></T>, caret: 15 },
];

const SelItem = ({ it }) => {
  if (it.sep) return <div className="w-[1px] h-[30px] bg-[#dcdcdc] ml-[6px] mr-[6px] shrink-0" />;
  return (
    <>
      <div className="w-[25px] h-[25px] flex items-center justify-center shrink-0">
        <div className={`w-[23px] h-[24px] flex items-center justify-center ${it.hl ? 'bg-[#cfe3e8] border border-[#bcd2d8]' : ''}`}>{it.ic}</div>
      </div>
      {it.caret && (
        <div className={`flex items-center shrink-0 ${it.caret === 16 ? 'w-[16px]' : it.caret === 15 ? 'w-[15px]' : 'w-[12px]'}`}><Caret /></div>
      )}
    </>
  );
};

const Dropdown = ({ text, w }) => (
  <div className={`${w} h-[24px] border border-[#a8a8a8] flex items-center justify-between pl-[2px] pr-[6px] shrink-0`}>
    <span className="text-[14px] text-[#222] leading-none">{text}</span>
    <Caret />
  </div>
);

const PartIcon = () => (
  <svg viewBox="0 0 14 14" className="w-[14px] h-[14px] shrink-0">
    <path d="M1 8l4-2V2l4-1 2 1v6l2 2v2l-6 2-6-2z" fill="#2f6fc8" />
    <path d="M5 6l3-1v4l-3 1z" fill="#fff" />
  </svg>
);

const Chevron = () => (
  <svg viewBox="0 0 14 12" className="w-[14px] h-[12px]">
    <path d="M1.500 1L7 10l5.500-9" fill="none" stroke="#1d6072" strokeWidth="2.600" />
  </svg>
);

const Viewport = () => (
  <svg viewBox="321 231 1406 775" className="w-full h-full block">
    <defs>
      <linearGradient id="lip" x1="0" y1="0" x2="0" y2="1">
        <stop offset="0" stopColor="#e0dacf" />
        <stop offset=".5" stopColor="#dcddd8" />
        <stop offset="1" stopColor="#d4dddd" />
      </linearGradient>
    </defs>
    {/* plane, three bands */}
    <path d="M876 315L1347 385 1319 569 848.500 500z" fill="#adc3c9" />
    <path d="M848.500 500L1319 569 1295 736 824 667z" fill="#cde6ee" />
    <path d="M824 667L1295 736 1267 920 797 851z" fill="#5a6468" />
    <path d="M876 315L1347 385 1267 920 797 851z" fill="none" stroke="#2c3436" strokeWidth="1.400" />
    {/* part below the plane */}
    <path d="M905 680L906 690Q910 702 928 710Q945 716 954 722Q962 728 975 730L1139 751Q1152 752 1165 749L1187 747Q1210 745 1213 722z" fill="#3a2f2b" />
    {/* part above the plane */}
    <path d="M935 484Q938 471 954 471L1213 506Q1235 512 1237 533L1235 586L1224 651L1213 722L906 678L908 651L919 594L930 516z" fill="#dfd6ca" />
    <path d="M908 651Q911 636 919 635Q927 636 930 639Q936 651 943 655L983 665L1131 686L1194 686Q1210 684 1213 677L1213 722L906 678z" fill="url(#lip)" />
    <g fill="none" stroke="#bfbdb4" strokeWidth=".9">
      <path d="M958 475l255 33" />
      <path d="M952 475l-22 160" />
      <path d="M1224 520l-19 160" />
      <path d="M930 529c20 0 50 6 90 16 22 6 35 12 56 18 22 7 36 14 55 21 15 5 30 8 41 10 18 2 38 4 52 6" />
      <path d="M930 524c20 0 50 6 90 16 22 6 35 12 56 18 22 7 36 14 55 21 15 5 30 8 41 10 18 2 38 4 52 6" />
      <path d="M922 582l61 4 93 14 74 12 76 4" />
      <path d="M922 586l61 4 93 14 74 12 76 4" />
      <path d="M919 635Q927 636 930 639Q936 651 943 655L983 665L1131 686L1194 686Q1210 684 1213 677" />
      <path d="M943 655l-5 18M963 660l-4 19M983 665l-4 18M1159 690l1 20M1172 688l2 22M1194 686l-4 24" />
    </g>
    {/* keypad openings */}
    <path d="M1002 500C1010 490 1030 488 1043 498C1052 503 1058 512 1057 522C1056 530 1048 531 1042 530C1036 528 1034 522 1027 522C1020 522 1018 526 1008 528C1002 530 998 512 1002 500z" fill="#a9bcc1" />
    <ellipse cx="1008" cy="526" rx="4" ry="2" fill="#cde6ee" />
    <ellipse cx="1046" cy="530" rx="4" ry="2" fill="#cde6ee" />
    <g transform="rotate(8 1096 537)" fill="none" stroke="#b0aea4" strokeWidth=".9">
      <ellipse cx="1096" cy="537" rx="24" ry="18" fill="#e2dacd" />
      <ellipse cx="1096" cy="537" rx="21" ry="15" />
      <ellipse cx="1096" cy="539" rx="13" ry="9" fill="#cde6ee" stroke="#a9bcc1" strokeWidth="2" />
    </g>
    <g transform="rotate(8 1146 520)" fill="none" stroke="#b0aea4" strokeWidth=".9">
      <ellipse cx="1146" cy="520" rx="24" ry="18" fill="#e2dacd" />
      <ellipse cx="1146" cy="520" rx="21" ry="15" />
      <ellipse cx="1146" cy="522" rx="14" ry="9" fill="#a9bcc1" stroke="none" />
    </g>
    <g transform="rotate(8 1183 556)" fill="none" stroke="#b0aea4" strokeWidth=".9">
      <ellipse cx="1183" cy="556" rx="24" ry="18" fill="#e2dacd" />
      <ellipse cx="1183" cy="556" rx="21" ry="15" />
      <ellipse cx="1183" cy="558" rx="14" ry="9" fill="#a9bcc1" stroke="none" />
    </g>
    <path d="M1172 558l12-3 2 10-13-2z" fill="#cde6ee" />
    {/* display window */}
    <path d="M1009 598l128 18-7 53-128-18z" fill="#cde6ee" stroke="#c2c6c0" strokeWidth=".8" />
    <path d="M1009 598l128 18-1 7-128-18z" fill="#a9bcc1" />
    <g transform="rotate(8 980 637)"><rect x="974" y="624" width="12" height="26" rx="6" fill="#a9bcc1" /><rect x="976" y="630" width="8" height="19" rx="4" fill="#e6f2f4" /></g>
    <g transform="rotate(8 1154 663)"><rect x="1148" y="650" width="12" height="26" rx="6" fill="#a9bcc1" /><rect x="1150" y="656" width="8" height="19" rx="4" fill="#e6f2f4" /></g>
    <g fill="#b4b3aa">
      {[[956, 588], [971, 591], [947, 597], [962, 599], [977, 602], [953, 608], [968, 611], [1177, 620], [1192, 623], [1168, 629], [1183, 632], [1198, 634], [1174, 641], [1189, 643]].map(([x, y]) => (
        <ellipse key={x} cx={x} cy={y} rx="3.400" ry="2.400" />
      ))}
    </g>
    {/* work csys */}
    <path d="M1070 632c-1-9 1-24 4-33 2 11 0 24-4 33z" fill="#2c4ea6" />
    <path d="M1074 635c18 0 36 2 50 7-18 1-36-1-50-5z" fill="#d05a5a" />
    <circle cx="1077" cy="587" r="5" fill="none" stroke="#c4cba0" />
    <text x="1056" y="591" fontSize="14" fill="#4f7a5a" fontFamily="Liberation Sans">YC</text>
    <text x="1057" y="597" fontSize="14" fill="#2c4ea6" fontFamily="Liberation Sans">ZC</text>
    <text x="1111" y="658" fontSize="14" fill="#b03a3a" fontFamily="Liberation Sans">XC</text>
    {/* view triad */}
    <path d="M387 907l26 3-4 33-26-3z" fill="#cfd0d2" stroke="#a6a7aa" />
    <path d="M385 924l26 3" stroke="#a6a7aa" />
    <path d="M384 940l2-22" stroke="#1f3f96" strokeWidth="2.400" />
    <path d="M383 924l3-11 3 11z" fill="#1f3f96" />
    <path d="M387 941l28 5" stroke="#c23c3c" strokeWidth="2.400" />
    <path d="M413 942l11 5-12 2z" fill="#c23c3c" />
    <circle cx="382.500" cy="942" r="3.400" fill="#b5b6b0" />
    <text x="385" y="910" fontSize="9" fill="#1f3f96" fontFamily="Liberation Sans">Y</text>
    <text x="385" y="919" fontSize="9" fill="#1f3f96" fontFamily="Liberation Sans">Z</text>
    <text x="426" y="952" fontSize="10" fill="#c23c3c" fontFamily="Liberation Sans">X</text>
  </svg>
);

export default function App() {
  return (
    <div className="w-[1728px] h-[1080px] overflow-hidden bg-white flex flex-col text-[#222] [font-family:'Noto_Sans','Noto_Sans_CJK_SC',sans-serif]">
      {/* title bar */}
      <div className="h-[30px] flex items-center shrink-0">
        <div className="w-[974px] flex items-center shrink-0 h-full">
          <div className="-ml-[12px] w-[22px] flex justify-center"><T><path d="M4 8h9a4 4 0 0 1 0 8H8M7 4L3 8l4 4" fill="none" stroke="#d0d0d0" strokeWidth="1.600" /></T></div>
          <div className="w-[12px] flex justify-center ml-[1px]"><Caret gray /></div>
          <div className="w-[22px] ml-[1px] flex justify-center"><T><path d="M16 8H7a4 4 0 0 0 0 8h5M13 4l4 4-4 4" fill="none" stroke="#d0d0d0" strokeWidth="1.600" /></T></div>
          <div className="w-[1px] h-[24px] bg-[#dcdcdc] ml-[3px]" />
          <div className="w-[23px] ml-[3px] flex justify-center"><T><path d="M15 3L7 14M5 3l9 11" stroke="#c8c8c8" strokeWidth="1.300" /><circle cx="5" cy="16" r="2" fill="none" stroke="#c8c8c8" /><circle cx="15" cy="16" r="2" fill="none" stroke="#c8c8c8" /></T></div>
          <div className="w-[23px] flex justify-center"><T><path d="M4 3h7v11H4zM9 7h7v10H9z" fill="#f0f0f0" stroke="#c8c8c8" /></T></div>
          <div className="w-[23px] flex justify-center"><T><rect x="4" y="4" width="11" height="14" fill="#f0f0f0" stroke="#c8c8c8" /><rect x="7" y="2" width="5" height="4" fill="#e4e4e4" stroke="#c8c8c8" /><path d="M7 10h5M7 13h5" stroke="#c8c8c8" /></T></div>
          <div className="w-[23px] flex justify-center"><T><circle cx="9" cy="9" r="6" fill="none" stroke="#b02a2a" /><path d="M9 1v16M1 9h16" stroke="#b02a2a" /><path d="M10 10h8v8h-8z" fill="#fff" stroke="#111" /><path d="M12 12l4 4" stroke="#111" /></T></div>
          <div className="w-[1px] h-[24px] bg-[#dcdcdc] ml-[2px]" />
          <div className="w-[26px] ml-[2px] flex justify-center"><T><g fill="none" stroke="#a59a9a"><path d="M10 2l8 5-8 6-8-6z" /><path d="M2 7v5l8 6 8-6V7" /></g><path d="M7 16l3 2 3-2" fill="none" stroke="#c94a4a" /></T></div>
          <div className="w-[12px] flex justify-center"><Caret /></div>
          <div className="w-[1px] h-[24px] bg-[#dcdcdc] ml-[5px]" />
          <div className="w-[26px] flex justify-center"><T><path d="M3 12l9-7 4 3-8 8z" fill="#cbb79a" stroke="#555" strokeWidth=".7" /><path d="M12 5l4 3 2-2-3-3z" fill="#5a6ab8" /></T></div>
          <div className="w-[1px] h-[24px] bg-[#dcdcdc] ml-[1px]" />
          <div className="w-[24px] ml-[1px] flex justify-center"><T><rect x="2" y="2" width="10" height="10" fill="#eaf0fa" stroke="#2a5aa0" strokeWidth="1.300" /><rect x="8" y="8" width="10" height="10" fill="#fff" stroke="#2a5aa0" strokeWidth="1.300" /><rect x="11" y="3" width="6" height="4" fill="#9cbce8" /></T></div>
          <span className="text-[14px] w-[57px] ml-[1px] text-[#333]">切换窗口</span>
          <div className="w-[24px] flex justify-center"><svg viewBox="0 0 16 16" className="w-[16px] h-[16px]"><rect x=".8" y=".8" width="14.400" height="14.400" fill="#e4edf9" stroke="#1f3f80" strokeWidth="1.500" /><rect x="2" y="2" width="12" height="5" fill="#5a8fd0" /></svg></div>
          <span className="text-[14px] w-[31px] ml-[1px] text-[#333]">窗口</span>
          <Caret />
          <div className="ml-[5px]"><More /></div>
        </div>
        <span className="text-[14px] text-[#333]">NX 12 - 建模</span>
        <div className="flex-1" />
        <span className="text-[15px] font-bold text-[#12989a] mr-[14px] [font-family:'Liberation_Sans',sans-serif]">SIEMENS</span>
      </div>

      {/* ribbon tabs */}
      <div className="h-[32px] bg-[#dcdcdc] flex items-end shrink-0">
        <div className="flex items-center h-[31px] text-[16px] text-[#333] -ml-[3px]">
          <div className="px-[13px]">装配</div>
          {NAMES.map((n) => <div key={n} className="px-[13px]">{n}</div>)}
          <div className="px-[13px] h-full flex items-center bg-white text-[#1a7c8e]">注塑模向导</div>
          <div className="px-[13px]">级进模向导</div>
        </div>
        <div className="flex-1" />
        <div className="w-[149px] h-[22px] mb-[5px] bg-white border border-[#b8b8b8] border-r-0 flex items-center justify-between pl-[2px] shrink-0">
          <span className="text-[13px] text-[#a8a8a8] leading-none">查找命令</span>
          <svg viewBox="0 0 16 16" className="w-[15px] h-[15px]"><circle cx="10" cy="6" r="4.500" fill="#fff" stroke="#555" strokeWidth="1.200" /><path d="M6.500 9.500L2 14" stroke="#555" strokeWidth="2" /></svg>
        </div>
      </div>

      {/* ribbon */}
      <div className="h-[106px] pt-[4px] flex border-b-2 border-[#dedede] shrink-0">
        {RIBBON.map((g) => <Group key={g.label} g={g} />)}
      </div>

      {/* selection bar */}
      <div className="h-[36px] flex items-center border-b border-[#999] shrink-0">
        <div className="w-[1px] h-[28px] bg-[#cfcfcf] ml-[3px] mr-[12px]" />
        <Dropdown text="无选择过滤器" w="w-[166px]" />
        <div className="w-[10px] shrink-0" />
        <Dropdown text="整个装配" w="w-[174px]" />
        <div className="w-[4px] shrink-0" />
        {SEL.map((it, i) => <SelItem key={i} it={it} />)}
        <div className="w-[1px] h-[30px] bg-[#dcdcdc] ml-[4px]" />
      </div>

      {/* navigator + graphics */}
      <div className="flex-1 flex min-h-0">
        <div className="w-[320px] shrink-0 flex flex-col overflow-hidden">
          <div className="w-[310px] h-[32px] flex items-center justify-between pr-[7px] shrink-0">
            <span className="text-[15px] -ml-[54px] text-[#333]">部件导航器</span>
            <div className="w-[14px] h-[13px] border border-[#222] border-t-2" />
          </div>
          <div className="w-[310px] flex-1 flex flex-col border-r border-[#d4d4d4] min-h-0">
            <div className="h-[25px] flex bg-[#f0f0f2] border-y border-[#d8d8d8] text-[15px] text-[#444] shrink-0">
              <div className="w-[143px] border-r border-[#d0d0d0] flex items-center"><Caret up /></div>
              <div className="w-[100px] border-r border-[#d0d0d0] flex items-center pl-[6px]">最新</div>
              <div className="flex-1 flex items-center pl-[6px]">附注</div>
            </div>
            {Array.from({ length: 26 }, (_, i) => (
              <div key={i} className={`h-[24px] flex border-b border-[#efefef] text-[15px] text-[#333] shrink-0 ${i % 2 ? 'bg-white' : 'bg-[#fbfbfb]'}`}>
                <div className="w-[143px] border-r border-[#ececec] flex items-center whitespace-nowrap">
                  {i === 0 && <span className="-ml-[19px]">模型视图</span>}
                  {i === 1 && <span className="-ml-[2px]">摄像机</span>}
                  {i === 2 && <span className="-ml-[2px]">图纸</span>}
                </div>
                <div className="w-[100px] border-r border-[#ececec]" />
              </div>
            ))}
          </div>
          <div className="w-[310px] h-[20px] bg-[#f0f0f0] flex items-center shrink-0 mt-[1px]">
            <div className="w-[257px] h-full bg-[#cdcdcd]" />
            <div className="flex-1 flex justify-end pr-[8px]">
              <svg viewBox="0 0 8 12" className="w-[7px] h-[11px]"><path d="M1 1l5 5-5 5" fill="none" stroke="#444" strokeWidth="1.400" /></svg>
            </div>
          </div>
          <div className="w-[310px] h-[5px] mt-[2px] bg-[#d0d0d0] border border-[#b4b4b4] shrink-0" />
          <div className="w-[310px] h-[28px] flex items-center justify-between border-b-2 border-[#d0d0d0] pr-[6px] shrink-0">
            <span className="text-[15px] text-[#1d7385] -ml-[9px]">性</span>
            <Chevron />
          </div>
          <div className="w-[310px] h-[28px] flex items-center justify-end border-b-2 border-[#d0d0d0] pr-[6px] shrink-0"><Chevron /></div>
          <div className="w-[310px] h-[28px] flex items-center justify-end border-b-2 border-[#d0d0d0] pr-[6px] mb-[6px] shrink-0"><Chevron /></div>
        </div>
        <div className="flex-1 flex flex-col min-w-0">
          <div className="h-[24px] flex shrink-0">
            <div className="w-[104px] flex items-center gap-[5px] pl-[7px]">
              <PartIcon />
              <span className="text-[15.500px] text-[#333]">前盖.prt</span>
            </div>
            <div className="w-[186px] flex items-center bg-[#4f9ab5] text-white pl-[7px]">
              <PartIcon />
              <span className="text-[15.500px] ml-[5px] whitespace-nowrap">前盖_top_000.prt</span>
              <svg viewBox="0 0 10 10" className="w-[10px] h-[10px] ml-[7px] shrink-0"><path d="M1 1h5l3 3v5H1z" fill="none" stroke="#fff" strokeWidth="1.800" /></svg>
              <svg viewBox="0 0 10 10" className="w-[9px] h-[9px] ml-[6px] shrink-0"><path d="M1 1l8 8M9 1l-8 8" stroke="#fff" strokeWidth="1.800" /></svg>
            </div>
          </div>
          <div className="h-[2px] bg-[#5d93a8] shrink-0" />
          <div className="flex-1 min-h-0 border border-[#a86060] bg-[linear-gradient(180deg,#b4b5b9_0%,#c9cacd_30%,#dcddde_65%,#e7e8ea_100%)]">
            <Viewport />
          </div>
        </div>
      </div>

      {/* status line */}
      <div className="h-[23px] flex items-center shrink-0 border-t border-[#c8c8c8] overflow-hidden">
        <span className="text-[14px] font-bold text-[#222] -ml-[9px] whitespace-nowrap">用 MB3，或者双击某一对象</span>
      </div>

      {/* windows taskbar */}
      <div className="h-[50px] flex shrink-0 bg-[linear-gradient(90deg,#d4dae6_0%,#d4dae6_45%,#e0e6ec_60%,#e8eef0_68%,#d6eadc_74%,#e2e7f0_80%,#e0e4f0_100%)]">
        <div className="w-[393px] bg-white flex items-center pl-[14px] justify-between pr-[20px] shrink-0 border-y border-[#d8d8d8]">
          <span className="text-[19px] text-[#444] whitespace-nowrap">在这里输入你要搜索的内容</span>
          <svg viewBox="0 0 70 46" className="w-[70px] h-[46px] shrink-0">
            <circle cx="32" cy="12" r="9" fill="#f0a83c" />
            <path d="M18 42c0-14 6-22 14-22s14 8 14 22z" fill="#f0a83c" />
            <circle cx="40" cy="29" r="7.500" fill="#bfe4f6" stroke="#3a5fa8" strokeWidth="2" />
            <path d="M45 34l8 7" stroke="#4a48a8" strokeWidth="4" />
            <circle cx="11" cy="22" r="2.500" fill="#e6c63c" />
            <circle cx="3" cy="34" r="2" fill="#6fc8c8" />
            <path d="M61 10l1.500 4 4 1.500-4 1.500-1.500 4-1.500-4-4-1.500 4-1.500z" fill="#c87ce0" />
          </svg>
        </div>
        <div className="w-[65px] flex items-center justify-center shrink-0">
          <svg viewBox="0 0 22 22" className="w-[22px] h-[22px]"><path d="M1 3h13M3 3v6M12 3v6M1 9h13M1 13h13M3 13v6M12 13v6M1 19h13M19 3v4M19 10v3M19 16v4" fill="none" stroke="#111" strokeWidth="1.400" /></svg>
        </div>
        <div className="w-[50px] ml-[5px] flex flex-col shrink-0">
          <div className="flex-1 flex items-center justify-center">
            <svg viewBox="0 0 32 32" className="w-[32px] h-[32px]">
              <circle cx="16" cy="16" r="15" fill="#1f7fc8" />
              <path d="M3 12C6 3 22-1 29 9c3 5 1 11-6 11-4 0-8-1-8-5-3 0-6 3-4 9-4-1-9-6-8-12z" fill="#3fc88a" />
              <path d="M15 14c-4 1-6 5-4 10 3 6 12 6 17-1-6 3-13 2-13-4z" fill="#0f5aa8" />
              <path d="M12 14c3-3 10-3 11 1 1 3-3 4-7 3-1-1-1-2 0-3z" fill="#fff" fillOpacity=".9" />
            </svg>
          </div>
          <div className="h-[3px] bg-[#1f78c8]" />
        </div>
        <div className="w-[61px] ml-[7px] flex flex-col bg-[#e6e9f1] shrink-0">
          <div className="flex-1 flex items-center justify-center">
            <svg viewBox="0 0 34 38" className="w-[34px] h-[38px]">
              <circle cx="17" cy="21" r="14" fill="#2f8fe0" />
              <path d="M5 28c8 4 22-6 26-16 2 8-3 19-11 22-6 1-12-1-15-6z" fill="#e8b83c" />
              <path d="M8 2l18 3-8 14z" fill="#d83c5c" stroke="#a02844" />
              <path d="M10 14c6 6 13 6 18 3-3 7-14 8-18-3z" fill="#7ce0d8" />
            </svg>
          </div>
          <div className="h-[3px] bg-[#1f78c8]" />
        </div>
        <div className="w-[51px] ml-[6px] flex flex-col shrink-0">
          <div className="flex-1 flex items-center justify-center">
            <svg viewBox="0 0 30 30" className="w-[29px] h-[29px]"><circle cx="15" cy="15" r="14" fill="#111" stroke="#bbb" strokeWidth="2" /><circle cx="15" cy="15" r="8" fill="#e8141c" /></svg>
          </div>
          <div className="h-[3px] bg-[#1f78c8]" />
        </div>
        <div className="w-[662px] shrink-0" />
        <div className="flex items-center shrink-0">
          <svg viewBox="0 0 34 30" className="w-[34px] h-[30px] shrink-0">
            <path d="M12 3c-4 2-5 7-1 11 3 2 8 1 10-1-4 0-9-3-9-10z" fill="#f0c040" />
            <circle cx="28" cy="4" r="4" fill="#c03030" />
            <path d="M6 27c-5 0-6-7-1-8 1-6 10-8 13-3 5-3 11 1 10 5 4 1 3 6-1 6z" fill="#a8cdee" stroke="#7aa4cc" strokeWidth=".8" />
          </svg>
          <span className="text-[19px] ml-[8px] w-[51px] text-[#222]">10°C</span>
          <span className="text-[18px] w-[35px] text-[#222] whitespace-nowrap">雾霾</span>
          <svg viewBox="0 0 16 9" className="w-[16px] h-[9px] ml-[21px]"><path d="M1 8l7-7 7 7" fill="none" stroke="#222" strokeWidth="1.200" /></svg>
          <svg viewBox="0 0 18 22" className="w-[17px] h-[21px] ml-[13px]">
            <ellipse cx="9" cy="11" rx="8" ry="10" fill="#111" />
            <ellipse cx="9" cy="14" rx="5" ry="6" fill="#fff" />
            <path d="M3 10c4 3 8 3 12 0v3c-4 2-8 2-12 0z" fill="#d82c2c" />
            <ellipse cx="9" cy="8" rx="2.500" ry="1.200" fill="#f0b030" />
          </svg>
          <svg viewBox="0 0 21 14" className="w-[21px] h-[14px] ml-[11px]"><rect x="5" y="3" width="15" height="9" fill="#222" stroke="#111" /><path d="M1 1l3 3M3 5h3" stroke="#111" strokeWidth="1.400" /></svg>
          <svg viewBox="0 0 16 16" className="w-[16px] h-[16px] ml-[12px]"><path d="M1 14C2 8 7 3 14 1M5 14c1-4 4-6 8-8M9 14c0-2 2-3 4-4" fill="none" stroke="#444" strokeWidth="1.100" /><circle cx="13" cy="14" r="1.400" fill="#111" /></svg>
          <svg viewBox="0 0 20 16" className="w-[20px] h-[16px] ml-[11px]"><path d="M1 5h3l4-4v14l-4-4H1z" fill="none" stroke="#333" strokeWidth="1.100" /><path d="M11 5c1 2 1 4 0 6M14 3c2 3 2 7 0 10M17 1c3 4 3 10 0 14" fill="none" stroke="#777" /></svg>
          <svg viewBox="0 0 18 18" className="w-[18px] h-[18px] ml-[10px]"><rect x="2" y="4" width="14" height="8" rx="1" fill="none" stroke="#333" strokeWidth="1.100" /><path d="M9 1v16" stroke="#333" strokeWidth="1.100" /></svg>
          <svg viewBox="0 0 20 20" className="w-[20px] h-[20px] ml-[17px]"><rect x="1" y="2" width="18" height="16" rx="4" fill="#e8662c" transform="rotate(-6 10 10)" /><path d="M15 6H7c-2 0-2 4 0 4h6c2 0 2 4 0 4H5" fill="none" stroke="#fff" strokeWidth="2.400" /></svg>
          <div className="ml-[26px] flex flex-col whitespace-nowrap text-[15px] leading-[23px] text-[#222]">
            <span className="ml-[14px]">18:43</span>
            <span>2023/1</span>
          </div>
        </div>
      </div>
    </div>
  );
}
